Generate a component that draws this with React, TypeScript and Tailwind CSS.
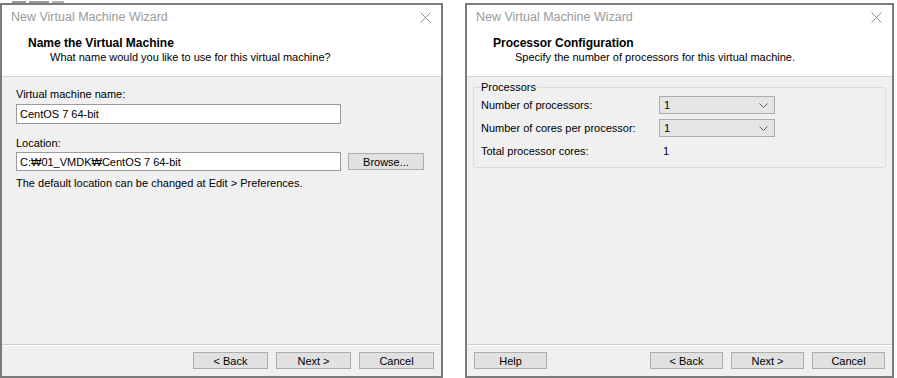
import React from 'react';

const FONT = "font-['Liberation_Sans','Noto_Sans',sans-serif]";

const CloseX: React.FC = () => (
  <svg width="11" height="11" viewBox="0 0 11 11" className="mr-[10px]">
    <path d="M0.5 0.5 L10.5 10.5 M10.5 0.5 L0.5 10.5" stroke="#8f8f8f" strokeWidth="1" fill="none" />
  </svg>
);

const Chevron: React.FC = () => (
  <svg width="9" height="5" viewBox="0 0 9 5">
    <path d="M0.5 0.5 L4.5 4.5 L8.5 0.5" stroke="#606060" strokeWidth="1" fill="none" />
  </svg>
);

const Btn: React.FC<{ label: string; w?: string }> = ({ label, w = 'w-[75px]' }) => (
  <div className={`${w} h-[17px] bg-[#e1e1e1] border border-[#adadad] flex items-center justify-center text-black`}>{label}</div>
);

const Combo: React.FC<{ value: string }> = ({ value }) => (
  <div className="w-[116px] h-[18px] bg-[#e5e5e5] border border-[#acacac] flex items-center justify-between pl-[4px] pr-[6px] text-black">
    <span>{value}</span>
    <Chevron />
  </div>
);

const Wizard: React.FC<{
  width: string;
  title: string;
  subtitle: string;
  children: React.ReactNode;
  footer: React.ReactNode;
}> = ({ width, title, subtitle, children, footer }) => (
  <div className={`${width} h-[375px] border-2 border-[#7b7b7b] flex flex-col bg-white`}>
    {/* title bar */}
    <div className="h-[24px] flex items-center justify-between pl-[9px] shrink-0">
      <span className="text-[#9a9a9a] text-[12.5px]">New Virtual Machine Wizard</span>
      <CloseX />
    </div>
    {/* header */}
    <div className="pl-[26px] pt-[7px] pb-[12px] shrink-0 leading-[14px]">
      <div className="font-bold text-[12px] text-black">{title}</div>
      <div className="pl-[22px] text-black">{subtitle}</div>
    </div>
    <div className="h-px bg-[#d4d4d4] shrink-0" />
    <div className="flex-1 bg-[#f0f0f0]">{children}</div>
    <div className="bg-[#f0f0f0] shrink-0">
      <div className="h-[2px] bg-[#cfcfcf] border-b border-white" />
      <div className="h-[30px] flex items-start pt-[6px] px-[7px]">{footer}</div>
    </div>
  </div>
);

export default function App() {
  return (
    <div className={`w-[897px] h-[378px] bg-white overflow-hidden text-[11px] leading-[14px] text-black ${FONT}`}>
      {/* clipped fragment of something above the screenshot */}
      <div className="h-[3px] flex items-end gap-[3px] pl-[12px]">
        <div className="w-[14px] h-[2px] bg-[#9a9a9a]" />
        <div className="w-[20px] h-[2px] bg-[#9a9a9a]" />
        <div className="w-[12px] h-[2px] bg-[#b0b0b0]" />
      </div>
      <div className="flex gap-[22px]">
        <Wizard
          width="w-[443px]"
          title="Name the Virtual Machine"
          subtitle="What name would you like to use for this virtual machine?"
          footer={
            <div className="flex-1 flex justify-end gap-[8px]">
              <Btn label="< Back" />
              <Btn label="Next >" />
              <Btn label="Cancel" />
            </div>
          }
        >
          <div className="pl-[14px] pt-[10px] flex flex-col">
            <div>Virtual machine name:</div>
            <div className="mt-[3px] w-[325px] h-[20px] bg-white border border-[#9a9a9a] flex items-center pl-[3px]">CentOS 7 64-bit</div>
            <div className="mt-[12px]">Location:</div>
            <div className="mt-[2px] flex items-center gap-[7px]">
              <div className="w-[325px] h-[19px] bg-white border border-[#9a9a9a] flex items-center pl-[3px]">C:₩01_VMDK₩CentOS 7 64-bit</div>
              <Btn label="Browse..." w="w-[76px]" />
            </div>
            <div className="mt-[5px]">The default location can be changed at Edit &gt; Preferences.</div>
          </div>
        </Wizard>
        <Wizard
          width="w-[429px]"
          title="Processor Configuration"
          subtitle="Specify the number of processors for this virtual machine."
          footer={
            <div className="flex-1 flex items-center">
              <Btn label="Help" w="w-[73px]" />
              <div className="flex-1" />
              <div className="flex gap-[8px]">
                <Btn label="< Back" w="w-[73px]" />
                <Btn label="Next >" w="w-[73px]" />
                <Btn label="Cancel" w="w-[73px]" />
              </div>
            </div>
          }
        >
          <div className="mx-[6px] mt-[10px] border border-[#dcdcdc] rounded-[2px] pl-[7px] pt-[8px] pb-[7px] relative">
            <span className="absolute -top-[8px] left-[6px] px-[1px] bg-[#f0f0f0]">Processors</span>
            <div className="flex flex-col gap-[5px]">
              <div className="flex items-center">
                <span className="w-[178px]">Number of processors:</span>
                <Combo value="1" />
              </div>
              <div className="flex items-center">
                <span className="w-[178px]">Number of cores per processor:</span>
                <Combo value="1" />
              </div>
              <div className="flex items-center h-[18px]">
                <span className="w-[178px]">Total processor cores:</span>
                <span className="pl-[4px]">1</span>
              </div>
            </div>
          </div>
        </Wizard>
      </div>
    </div>
  );
}
